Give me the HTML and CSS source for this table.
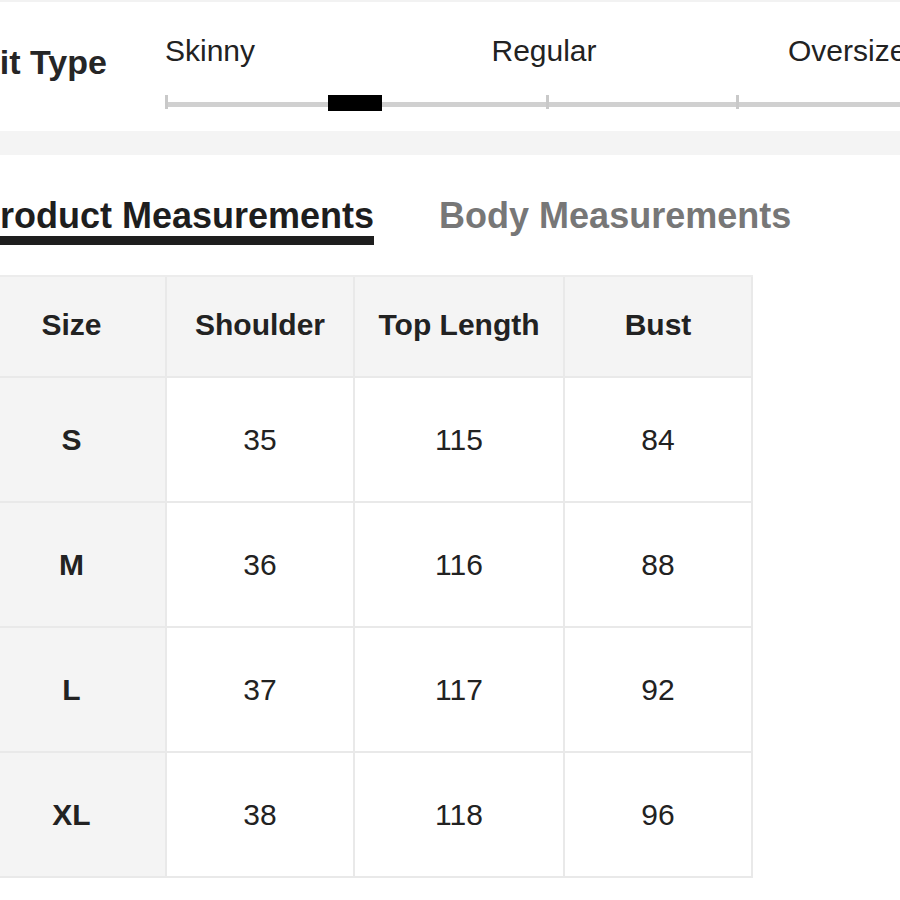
FILE: index.html
```html
<!DOCTYPE html>
<html lang="en">
<head>
<meta charset="utf-8">
<title>Size Guide</title>
<link rel="stylesheet" href="styles.css">
</head>
<body>
<div class="page">
  <section class="fit">
    <div class="fit-label">Fit Type</div>
    <div class="fit-scale">
      <div class="fit-labels">
        <span class="lbl-start">Skinny</span>
        <span class="lbl-mid">Regular</span>
        <span class="lbl-end">Oversized</span>
      </div>
      <div class="track">
        <span class="tick"></span>
        <span class="tick"></span>
        <span class="tick"></span>
        <span class="tick"></span>
        <span class="tick"></span>
        <span class="thumb"></span>
      </div>
    </div>
  </section>
  <div class="band"></div>
  <nav class="tabs">
    <span class="tab active">Product Measurements</span>
    <span class="tab">Body Measurements</span>
  </nav>
  <table class="sizes">
    <colgroup>
      <col class="c1"><col class="c2"><col class="c3"><col class="c4">
    </colgroup>
    <thead>
      <tr><th>Size</th><th>Shoulder</th><th>Top Length</th><th>Bust</th></tr>
    </thead>
    <tbody>
      <tr><th>S</th><td>35</td><td>115</td><td>84</td></tr>
      <tr><th>M</th><td>36</td><td>116</td><td>88</td></tr>
      <tr><th>L</th><td>37</td><td>117</td><td>92</td></tr>
      <tr><th>XL</th><td>38</td><td>118</td><td>96</td></tr>
    </tbody>
  </table>
</div>
</body>
</html>
```

FILE: styles.css
```css
html, body {
  margin: 0;
  padding: 0;
  background: #fff;
}
body {
  width: 900px;
  height: 900px;
  overflow: hidden;
  font-family: "Liberation Sans", Arial, sans-serif;
  color: #222;
}
.page {
  margin-left: -22px;
  width: 980px;
}

/* Fit type */
.fit {
  display: flex;
  align-items: flex-start;
  border-top: 2px solid #f2f2f2;
  height: 129px;
}
.fit-label {
  width: 186px;
  padding-left: 1px;
  margin-top: 43px;
  font-size: 34px;
  line-height: 34px;
  font-weight: bold;
  color: #262626;
}
.fit-scale {
  width: 764px;
  margin-top: 34px;
}
.fit-labels {
  display: grid;
  grid-template-columns: 1fr auto 1fr;
  font-size: 30px;
  line-height: 30px;
  color: #222;
}
.lbl-start { justify-self: start; }
.lbl-mid { justify-self: center; padding-right: 6px; }
.lbl-end { justify-self: end; padding-right: 6px; }

.track {
  position: relative;
  margin-top: 29px;
  height: 16px;
  display: flex;
  justify-content: space-between;
  align-items: flex-start;
  background: linear-gradient(#d0d0d0, #d0d0d0) 0 7px / 100% 5px no-repeat;
}
.tick {
  width: 3px;
  height: 14px;
  background: #c9c9c9;
}
.thumb {
  position: absolute;
  left: 163px;
  top: 0;
  width: 54px;
  height: 16px;
  background: #000;
}

/* Gray band */
.band {
  height: 24px;
  background: #f4f4f4;
}

/* Tabs */
.tabs {
  display: flex;
  gap: 65px;
  margin-top: 43px;
  margin-left: -2px;
  font-size: 36px;
  line-height: 36px;
  font-weight: bold;
}
.tab {
  color: #777;
  padding-bottom: 2px;
}
.tab.active {
  color: #1e1e1e;
  border-bottom: 9px solid #1e1e1e;
}

/* Table */
.sizes {
  margin-top: 30px;
  border-collapse: separate;
  border-spacing: 0;
  border-top: 2px solid #ececec;
  table-layout: fixed;
  width: 775px;
}
.c1 { width: 189px; }
.c2 { width: 188px; }
.c3 { width: 210px; }
.c4 { width: 188px; }
.sizes th,
.sizes td {
  box-sizing: border-box;
  padding: 0;
  text-align: center;
  vertical-align: middle;
  font-size: 30px;
  border-right: 2px solid #e9e9e9;
  border-bottom: 2px solid #e9e9e9;
  color: #222;
}
.sizes thead th {
  height: 101px;
  background: #f4f4f4;
  font-weight: bold;
  padding-bottom: 3px;
}
.sizes tbody th {
  height: 125px;
  background: #f4f4f4;
  font-weight: bold;
}
.sizes td {
  height: 125px;
  background: #fff;
  font-weight: normal;
}
```
